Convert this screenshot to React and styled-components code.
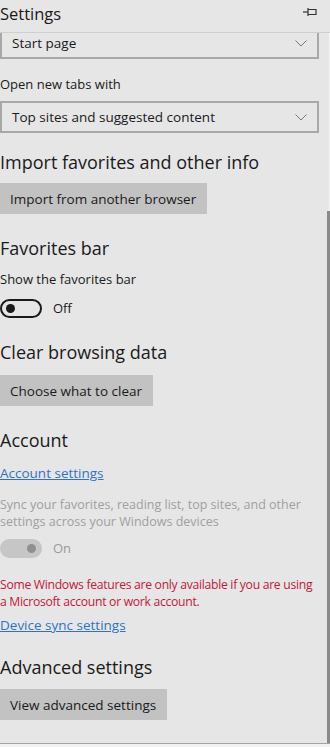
import React from "react";
import styled, { createGlobalStyle } from "styled-components";

const Global = createGlobalStyle`
  html, body {
    margin: 0;
    padding: 0;
    background: #f2f2f2;
  }
  body {
    font-family: "Open Sans", "Noto Sans", sans-serif;
    color: #1a1a1a;
  }
  * {
    box-sizing: border-box;
  }
`;

function PinIcon() {
  return (
    <svg width="16" height="10" viewBox="0 0 16 10" fill="none" stroke="#333" strokeWidth="1.2">
      <path d="M1 5 H6" />
      <path d="M6 1 V9" />
      <path d="M6 2.5 H14 V7.5 H6" />
    </svg>
  );
}

function Chevron() {
  return (
    <svg width="12" height="7" viewBox="0 0 12 7" fill="none" stroke="#777" strokeWidth="1">
      <path d="M0.5 0.5 L6 6 L11.5 0.5" />
    </svg>
  );
}

export default function App() {
  return (
    <>
      <Global />
      <StyledPanel>
        <div className="header">
          <span className="title">Settings</span>
          <PinIcon />
        </div>
        <div className="body">
          <div className="content">
            <Select>
              <span>Start page</span>
              <Chevron />
            </Select>
            <Label>Open new tabs with</Label>
            <Select>
              <span>Top sites and suggested content</span>
              <Chevron />
            </Select>

            <Heading $mt={16}>Import favorites and other info</Heading>
            <Button>Import from another browser</Button>

            <Heading>Favorites bar</Heading>
            <Label $mt={7}>Show the favorites bar</Label>
            <ToggleRow $mt={9}>
              <Toggle />
              <ToggleText>Off</ToggleText>
            </ToggleRow>

            <Heading $mt={21} $mb={10}>Clear browsing data</Heading>
            <Button>Choose what to clear</Button>

            <Heading $mb={10}>Account</Heading>
            <Link>Account settings</Link>
            <Note $mt={13}>
              Sync your favorites, reading list, top sites, and other settings
              across your Windows devices
            </Note>
            <ToggleRow>
              <Toggle $on $disabled />
              <ToggleText $disabled>On</ToggleText>
            </ToggleRow>
            <Note $red $mt={18} $mb={5}>
              Some Windows features are only available if you are using a
              Microsoft account or work account.
            </Note>
            <Link $mt={4}>Device sync settings</Link>

            <Heading $mt={19} $mb={9}>Advanced settings</Heading>
            <Button>View advanced settings</Button>
          </div>
          <div className="scrollbar">
            <div className="track" />
            <div className="thumb" />
          </div>
        </div>
      </StyledPanel>
    </>
  );
}

const StyledPanel = styled.div`
  width: 330px;
  height: 744px;
  background: #e6e6e6;
  border-bottom: 1px solid #a3a3a3;
  display: flex;
  flex-direction: column;
  overflow: hidden;

  .header {
    height: 33px;
    flex: none;
    display: flex;
    align-items: center;
    justify-content: space-between;
    padding: 0 12px 0 0;
    border-bottom: 1px solid #cfcfcf;
  }
  .title {
    font-size: 16.5px;
    margin-top: -6px;
    color: #1a1a1a;
  }
  .header svg {
    margin-top: -8px;
  }
  .body {
    flex: 1;
    display: flex;
    overflow: hidden;
  }
  .content {
    flex: 1;
    margin-top: -6px;
    padding-right: 8px;
  }
  .scrollbar {
    width: 3px;
    display: flex;
    flex-direction: column;
  }
  .track {
    height: 178px;
    border-right: 1px solid #f4f4f4;
  }
  .thumb {
    flex: 1;
    background: #8a8a8a;
  }
`;

const Select = styled.div`
  height: 32px;
  border: 2px solid #a8a8a8;
  display: flex;
  align-items: center;
  justify-content: space-between;
  padding: 0 10px 0 10px;
  font-size: 13.5px;
  color: #1a1a1a;
`;

const Label = styled.div`
  font-size: 13px;
  line-height: 20px;
  margin: ${(p) => (p.$mt ?? 15)}px 0 7px 0;
`;

const Heading = styled.div`
  font-size: 18px;
  line-height: 26px;
  margin: ${(p) => (p.$mt ?? 21)}px 0 ${(p) => (p.$mb ?? 8)}px 0;
  color: #1a1a1a;
`;

const Button = styled.div`
  display: inline-flex;
  align-items: center;
  height: 31px;
  padding: 0 11px 0 10px;
  background: #c2c2c2;
  font-size: 13.5px;
`;

const ToggleRow = styled.div`
  display: flex;
  align-items: center;
  gap: 11px;
  height: 20px;
  margin-top: ${(p) => (p.$mt ?? 0)}px;
`;

const Toggle = styled.div`
  width: 42px;
  height: 19px;
  border-radius: 10px;
  border: 2px solid ${(p) => (p.$disabled ? "#c6c6c6" : "#1a1a1a")};
  background: ${(p) => (p.$on ? "#c6c6c6" : "transparent")};
  display: flex;
  align-items: center;
  justify-content: ${(p) => (p.$on ? "flex-end" : "flex-start")};
  padding: 0 4px;

  &::after {
    content: "";
    width: 9px;
    height: 9px;
    border-radius: 50%;
    background: ${(p) => (p.$disabled ? "#909090" : "#1a1a1a")};
  }
`;

const ToggleText = styled.span`
  font-size: 13px;
  color: ${(p) => (p.$disabled ? "#9a9a9a" : "#1a1a1a")};
`;

const Link = styled.div`
  font-size: 13.5px;
  line-height: 20px;
  color: #2f73bf;
  text-decoration: underline;
  margin: ${(p) => (p.$mt ?? 8)}px 0 8px 0;
`;

const Note = styled.div`
  font-size: ${(p) => (p.$red ? 12.2 : 12.5)}px;
  line-height: 17px;
  letter-spacing: ${(p) => (p.$red ? -0.3 : 0)}px;
  color: ${(p) => (p.$red ? "#c4173a" : "#a0a0a0")};
  margin: ${(p) => (p.$mt ?? 8)}px 0 ${(p) => (p.$mb ?? 8)}px 0;
`;
